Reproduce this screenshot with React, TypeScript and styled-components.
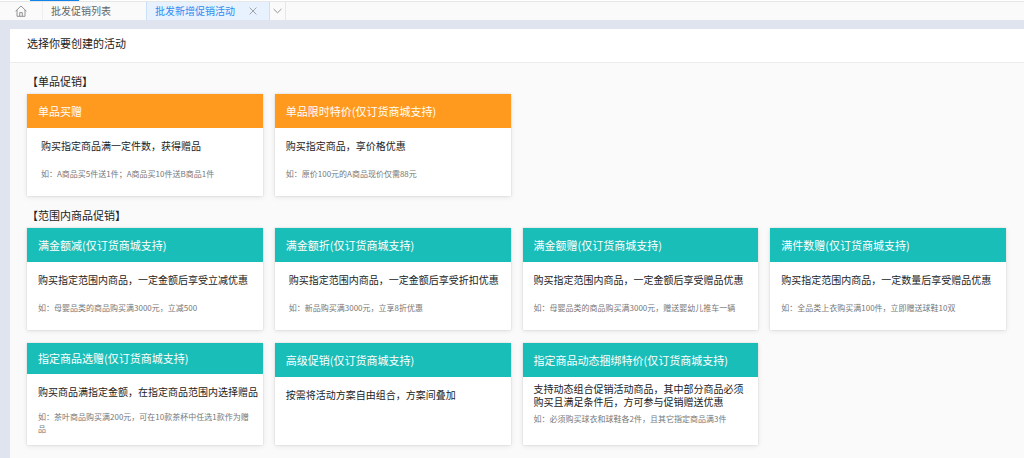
import React from "react";
import styled, { createGlobalStyle } from "styled-components";

const GlobalStyle = createGlobalStyle`
  * { box-sizing: border-box; }
  body {
    margin: 0;
    background: #dfe4ee;
    color: #222;
    font-family: "Noto Sans CJK SC", "Noto Sans", sans-serif;
    font-size: 11px;
  }
  button { font: inherit; color: inherit; background: none; border: 0; padding: 0; }
  h1, h2, h3, p { margin: 0; font-weight: 400; }
`;

const Page = styled.div`
  display: flex;
  flex-direction: column;
  min-height: 100vh;
`;

const TopStrip = styled.div`
  height: 1px;
  padding-left: 30px;
  background: #fff;
`;

const ActiveModule = styled.div`
  width: 49px;
  height: 1px;
  background: #1283e8;
`;

const TabBar = styled.nav`
  display: flex;
  height: 19px;
  background: #fafafa;
  border-top: 1px solid #e6e6e6;
  font-size: 10px;
  line-height: 20px;
`;

const HomeTab = styled.button`
  display: flex;
  align-items: center;
  justify-content: center;
  width: 43px;
  border-right: 1px solid #eee;
`;

const Tab = styled.div<{ $active?: boolean }>`
  display: flex;
  align-items: center;
  justify-content: space-between;
  width: ${(p) => (p.$active ? 124 : 103)}px;
  padding: 0 12px 0 8px;
  color: ${(p) => (p.$active ? "#2d8cf0" : "#666")};
  background: ${(p) => (p.$active ? "#e8f2fe" : "transparent")};
  border: solid #c9e0fa;
  border-width: ${(p) => (p.$active ? "0 1px" : "0")};
`;

const TabButton = styled.button`
  white-space: nowrap;
`;

const IconButton = styled.button`
  display: flex;
  align-items: center;
`;

const MoreButton = styled.button`
  display: flex;
  align-items: center;
  justify-content: center;
  width: 16px;
  border-right: 1px solid #e6e6e6;
`;

const Panel = styled.main`
  flex: 1;
  margin: 9px 0 0 10px;
  background: #fafafa;
`;

const PanelTitle = styled.h1`
  height: 34px;
  padding: 0 17px;
  background: #fff;
  border-bottom: 1px solid #ececec;
  font-size: 11px;
  line-height: 28px;
`;

const Content = styled.div`
  padding: 9px 18px 12px 17px;
`;

const SectionTitle = styled.h2`
  height: 22px;
  font-size: 11px;
  line-height: 18px;
`;

const Section = styled.section`
  & + & { margin-top: 10px; }
`;

const Grid = styled.div`
  display: grid;
  grid-template-columns: repeat(4, 1fr);
  gap: 13px 12px;
`;

const Card = styled.article`
  min-height: 102px;
  background: #fff;
  box-shadow: 0 0 1px rgba(0, 0, 0, 0.2), 0 1px 5px rgba(0, 0, 0, 0.1);
`;

const CardTitle = styled.h3<{ $tone: string; $short?: boolean }>`
  height: ${(p) => (p.$short ? 31 : 34)}px;
  padding: 0 11px;
  background: ${(p) => p.$tone};
  color: #fff;
  font-size: 11px;
  line-height: ${(p) => (p.$short ? 30 : 34)}px;
`;

const CardBody = styled.div<{ $inset?: number; $short?: boolean; $dense?: boolean }>`
  display: flex;
  flex-direction: column;
  gap: ${(p) => (p.$dense ? 5 : p.$short ? 13 : 16)}px;
  padding-top: ${(p) => (p.$dense ? 5 : 11)}px;
  padding-right: ${(p) => (p.$dense ? 10 : 4)}px;
  padding-left: ${(p) => p.$inset ?? 11}px;
`;

const Description = styled.p`
  font-size: 10px;
  line-height: 13px;
`;

const Example = styled.p`
  padding-right: 8px;
  color: #777;
  font-size: 8px;
  line-height: 12px;
`;

const ORANGE = "#ff9a1e";
const TEAL = "#19beb9";

type Promo = {
  title: string;
  text: string;
  example?: string;
  inset?: number;
  short?: boolean;
  dense?: boolean;
};

const singlePromos: Promo[] = [
  { title: "单品买赠", text: "购买指定商品满一定件数，获得赠品", example: "如：A商品买5件送1件；A商品买10件送B商品1件", inset: 14 },
  { title: "单品限时特价(仅订货商城支持)", text: "购买指定商品，享价格优惠", example: "如：原价100元的A商品现价仅需88元" },
];

const rangePromos: Promo[] = [
  { title: "满金额减(仅订货商城支持)", text: "购买指定范围内商品，一定金额后享受立减优惠", example: "如：母婴品类的商品购买满3000元，立减500" },
  { title: "满金额折(仅订货商城支持)", text: "购买指定范围内商品，一定金额后享受折扣优惠", example: "如：新品购买满3000元，立享8折优惠", inset: 14 },
  { title: "满金额赠(仅订货商城支持)", text: "购买指定范围内商品，一定金额后享受赠品优惠", example: "如：母婴品类的商品购买满3000元，赠送婴幼儿推车一辆" },
  { title: "满件数赠(仅订货商城支持)", text: "购买指定范围内商品，一定数量后享受赠品优惠", example: "如：全品类上衣购买满100件，立即赠送球鞋10双" },
  { title: "指定商品选赠(仅订货商城支持)", text: "购买商品满指定金额，在指定商品范围内选择赠品", example: "如：茶叶商品购买满200元，可在10款茶杯中任选1款作为赠品", short: true },
  { title: "高级促销(仅订货商城支持)", text: "按需将活动方案自由组合，方案间叠加" },
  { title: "指定商品动态捆绑特价(仅订货商城支持)", text: "支持动态组合促销活动商品，其中部分商品必须购买且满足条件后，方可参与促销赠送优惠", example: "如：必须购买球衣和球鞋各2件，且其它指定商品满3件", dense: true },
];

function PromoSection({ title, tone, promos }: { title: string; tone: string; promos: Promo[] }) {
  return (
    <Section>
      <SectionTitle>{title}</SectionTitle>
      <Grid>
        {promos.map((p) => (
          <Card key={p.title}>
            <CardTitle $tone={tone} $short={p.short}>{p.title}</CardTitle>
            <CardBody $inset={p.inset} $short={p.short} $dense={p.dense}>
              <Description>{p.text}</Description>
              {p.example && <Example>{p.example}</Example>}
            </CardBody>
          </Card>
        ))}
      </Grid>
    </Section>
  );
}

export default function App() {
  return (
    <Page>
      <GlobalStyle />
      <TopStrip><ActiveModule /></TopStrip>
      <TabBar>
        <HomeTab aria-label="首页">
          <svg width="12" height="12" viewBox="0 0 12 12" fill="none" stroke="#888" strokeWidth="0.9">
            <path d="M0.6 6.2 6 1l5.4 5.2M2 5v6.3h8V5M4.7 11.3V7.6h2.6v3.7" />
          </svg>
        </HomeTab>
        <Tab><TabButton>批发促销列表</TabButton></Tab>
        <Tab $active>
          <TabButton>批发新增促销活动</TabButton>
          <IconButton aria-label="关闭">
            <svg width="8" height="8" viewBox="0 0 8 8" stroke="#999" strokeWidth="0.9">
              <path d="M0.6 0.6l6.8 6.8M7.4 0.6 0.6 7.4" />
            </svg>
          </IconButton>
        </Tab>
        <MoreButton aria-label="更多">
          <svg width="9" height="6" viewBox="0 0 9 6" fill="none" stroke="#888" strokeWidth="0.9">
            <path d="M0.6 1 4.5 4.8 8.4 1" />
          </svg>
        </MoreButton>
      </TabBar>
      <Panel>
        <PanelTitle>选择你要创建的活动</PanelTitle>
        <Content>
          <PromoSection title="【单品促销】" tone={ORANGE} promos={singlePromos} />
          <PromoSection title="【范围内商品促销】" tone={TEAL} promos={rangePromos} />
        </Content>
      </Panel>
    </Page>
  );
}
